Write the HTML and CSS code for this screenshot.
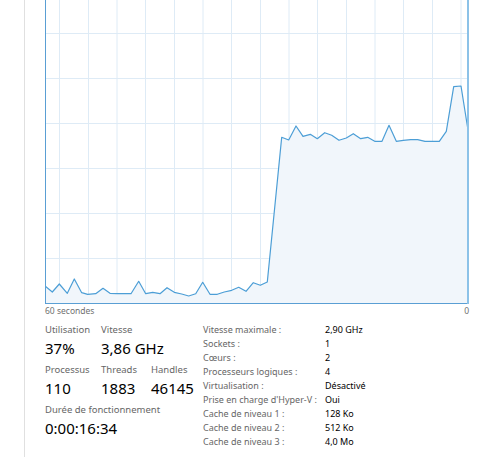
FILE: index.html
```html
<!DOCTYPE html>
<html>
<head>
<meta charset="utf-8">
<title>Processeur</title>
<link rel="stylesheet" href="styles.css">
</head>
<body>
<div class="panel">
	<svg class="graph" width="424" height="304" viewBox="0 0 424 304">
		<g class="grid">
			<line x1="0" y1="33.5" x2="424" y2="33.5"/>
			<line x1="0" y1="78.5" x2="424" y2="78.5"/>
			<line x1="0" y1="123.5" x2="424" y2="123.5"/>
			<line x1="0" y1="168.5" x2="424" y2="168.5"/>
			<line x1="0" y1="213.5" x2="424" y2="213.5"/>
			<line x1="0" y1="258.5" x2="424" y2="258.5"/>
			<line x1="14.5" y1="0" x2="14.5" y2="304"/>
			<line x1="43.5" y1="0" x2="43.5" y2="304"/>
			<line x1="72" y1="0" x2="72" y2="304"/>
			<line x1="100.5" y1="0" x2="100.5" y2="304"/>
			<line x1="129.5" y1="0" x2="129.5" y2="304"/>
			<line x1="158" y1="0" x2="158" y2="304"/>
			<line x1="186.5" y1="0" x2="186.5" y2="304"/>
			<line x1="215.5" y1="0" x2="215.5" y2="304"/>
			<line x1="244" y1="0" x2="244" y2="304"/>
			<line x1="272.5" y1="0" x2="272.5" y2="304"/>
			<line x1="301.5" y1="0" x2="301.5" y2="304"/>
			<line x1="330" y1="0" x2="330" y2="304"/>
			<line x1="358.5" y1="0" x2="358.5" y2="304"/>
			<line x1="387.5" y1="0" x2="387.5" y2="304"/>
			<line x1="416" y1="0" x2="416" y2="304"/>
		</g>
		<polygon class="area" points="0,286 7.3,292 14.3,284 22.3,293.3 29.3,279 36.7,292.7 42.7,294.3 50.7,293.7 58,288.3 65,293.3 72.3,293.7 86,293.7 93.7,281.3 100.7,293.7 107.7,292.3 115,293.7 122,287.7 129.3,292.3 136.7,294 143.7,296 150.7,293.7 157.7,282.3 165,294.3 172.3,294.3 179.3,292 186.7,290.3 193.7,287.3 201,291.3 208.3,282.7 215.3,285.3 222.3,282 236.7,137.3 243.7,140 251,126 258,136.3 265.3,134.3 272.3,138.7 279.7,132.7 286.7,135.3 294,140.3 301.3,138 308.3,133.7 315.7,138.7 322.7,137.3 329.7,141.3 337,141.3 344,125.3 351.3,141.3 358.3,140.3 365.7,139.7 372.7,139.7 380,141.3 387,141.3 394.3,141.3 401.3,131.3 408.7,86.7 416,86 423,130 423,303 0,303"/>
		<polyline class="curve" points="0,286 7.3,292 14.3,284 22.3,293.3 29.3,279 36.7,292.7 42.7,294.3 50.7,293.7 58,288.3 65,293.3 72.3,293.7 86,293.7 93.7,281.3 100.7,293.7 107.7,292.3 115,293.7 122,287.7 129.3,292.3 136.7,294 143.7,296 150.7,293.7 157.7,282.3 165,294.3 172.3,294.3 179.3,292 186.7,290.3 193.7,287.3 201,291.3 208.3,282.7 215.3,285.3 222.3,282 236.7,137.3 243.7,140 251,126 258,136.3 265.3,134.3 272.3,138.7 279.7,132.7 286.7,135.3 294,140.3 301.3,138 308.3,133.7 315.7,138.7 322.7,137.3 329.7,141.3 337,141.3 344,125.3 351.3,141.3 358.3,140.3 365.7,139.7 372.7,139.7 380,141.3 387,141.3 394.3,141.3 401.3,131.3 408.7,86.7 416,86 423,130"/>
		<line class="edge" x1="0.5" y1="0" x2="0.5" y2="304"/>
		<line class="edge" x1="0" y1="303.5" x2="424" y2="303.5"/>
		<line class="edge-r" x1="423" y1="0" x2="423" y2="304"/>
	</svg>
	<div class="axis">
		<span>60 secondes</span>
		<span>0</span>
	</div>
	<div class="details">
		<div class="stats">
			<div class="stat">
				<div class="label">Utilisation</div>
				<div class="value">37%</div>
			</div>
			<div class="stat span2">
				<div class="label">Vitesse</div>
				<div class="value">3,86 GHz</div>
			</div>
			<div class="stat">
				<div class="label">Processus</div>
				<div class="value">110</div>
			</div>
			<div class="stat">
				<div class="label">Threads</div>
				<div class="value">1883</div>
			</div>
			<div class="stat">
				<div class="label">Handles</div>
				<div class="value">46145</div>
			</div>
			<div class="stat span3">
				<div class="label">Durée de fonctionnement</div>
				<div class="value">0:00:16:34</div>
			</div>
		</div>
		<table class="specs">
			<tr><td>Vitesse maximale :</td><td>2,90 GHz</td></tr>
			<tr><td>Sockets :</td><td>1</td></tr>
			<tr><td>Cœurs :</td><td>2</td></tr>
			<tr><td>Processeurs logiques :</td><td>4</td></tr>
			<tr><td>Virtualisation :</td><td>Désactivé</td></tr>
			<tr><td>Prise en charge d'Hyper-V :</td><td>Oui</td></tr>
			<tr><td>Cache de niveau 1 :</td><td>128 Ko</td></tr>
			<tr><td>Cache de niveau 2 :</td><td>512 Ko</td></tr>
			<tr><td>Cache de niveau 3 :</td><td>4,0 Mo</td></tr>
		</table>
	</div>
</div>
</body>
</html>
```
FILE: styles.css
```css
* { margin: 0; padding: 0; }
html, body{
	background: #fff;
	overflow: hidden;
}
body{
	font-family: "Noto Sans", "Open Sans", sans-serif;
	color: #000;
}
.panel{
	margin-left: 24px;
	border-left: 1px solid #e0e0e0;
	padding-left: 20px;
	height: 457px;
}
.graph{
	display: block;
}
.grid line{
	stroke: #deebf6;
	stroke-width: 1;
}
.area{
	fill: #f1f6fb;
}
.curve{
	fill: none;
	stroke: #4c9ed6;
	stroke-width: 1.2;
	stroke-linejoin: round;
}
.edge{
	stroke: #5a9fd4;
	stroke-width: 1;
}
.edge-r{
	stroke: #8cc2e8;
	stroke-width: 2;
}

.axis{
	width: 424px;
	display: flex;
	justify-content: space-between;
	font-size: 8.5px;
	line-height: 14px;
	color: #707070;
}

.details{
	display: flex;
	margin-top: 4px;
}
.stats{
	display: grid;
	grid-template-columns: 56px 50px 52px;
	row-gap: 4px;
	align-content: start;
}
.span2{ grid-column: span 2; }
.span3{ grid-column: span 3; }
.label{
	font-size: 9.5px;
	line-height: 16px;
	color: #666;
}
.value{
	font-size: 15px;
	line-height: 20px;
}

.specs{
	border-collapse: collapse;
	font-size: 9px;
	margin-top: 1px;
}
.specs td{
	padding: 0;
	height: 14px;
	line-height: 14px;
	white-space: nowrap;
}
.specs td:first-child{
	width: 122px;
	color: #666;
}
```
